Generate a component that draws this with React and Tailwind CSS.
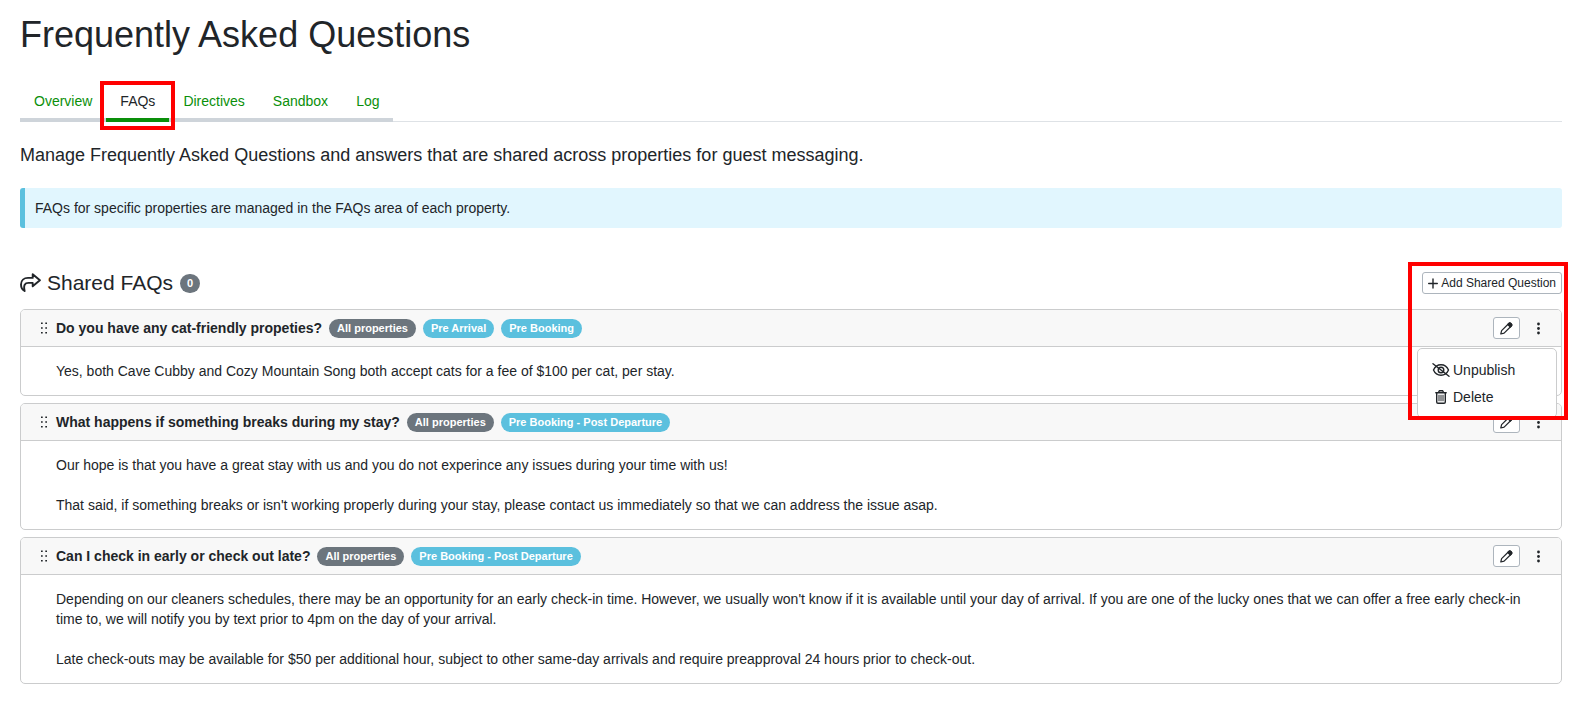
import { useState } from "react"

/* ---------------- Data ---------------- */
const tabs = ["Overview", "FAQs", "Directives", "Sandbox", "Log"]

const faqs = [
  {
    id: 1,
    question: "Do you have any cat-friendly propeties?",
    stages: ["Pre Arrival", "Pre Booking"],
    answer: ["Yes, both Cave Cubby and Cozy Mountain Song both accept cats for a fee of $100 per cat, per stay."],
  },
  {
    id: 2,
    question: "What happens if something breaks during my stay?",
    stages: ["Pre Booking - Post Departure"],
    answer: [
      "Our hope is that you have a great stay with us and you do not experince any issues during your time with us!",
      "That said, if something breaks or isn't working properly during your stay, please contact us immediately so that we can address the issue asap.",
    ],
  },
  {
    id: 3,
    question: "Can I check in early or check out late?",
    stages: ["Pre Booking - Post Departure"],
    answer: [
      "Depending on our cleaners schedules, there may be an opportunity for an early check-in time. However, we usually won't know if it is available until your day of arrival. If you are one of the lucky ones that we can offer a free early check-in time to, we will notify you by text prior to 4pm on the day of your arrival.",
      "Late check-outs may be available for $50 per additional hour, subject to other same-day arrivals and require preapproval 24 hours prior to check-out.",
    ],
  },
]

export default function App() {
  const [activeTab, setActiveTab] = useState("FAQs")
  const [openMenu, setOpenMenu] = useState(1)

  return (
    <main className="bg-white pt-3 pr-4 pb-4 pl-5 font-['Liberation_Sans',Arial,sans-serif] text-sm leading-5 text-[#212529]">
      <h1 className="text-4xl leading-[46px]">Frequently Asked Questions</h1>

      {/* Tabs */}
      <nav className="mt-[26px] flex border-b border-[#dee2e6]">
        {tabs.map((tab) => (
          <a
            key={tab}
            href={`#${tab.toLowerCase()}`}
            onClick={() => setActiveTab(tab)}
            className={
              "relative -mb-px border-b-4 px-3.5 py-[7px] " +
              (tab === activeTab ? "border-[#0a8f0a] text-[#212529]" : "border-[#ced4da] text-[#0a8f0a]")
            }
          >
            {tab}
            {tab === "FAQs" && (
              <span className="pointer-events-none absolute -inset-x-1.5 -top-[3px] -bottom-3 z-10 border-4 border-[#ff0000]" />
            )}
          </a>
        ))}
      </nav>

      <p className="mt-[19px] text-lg leading-7">
        Manage Frequently Asked Questions and answers that are shared across properties for guest messaging.
      </p>

      <div className="mt-[19px] rounded-[3px] border-l-[5px] border-[#5bc0de] bg-[#e1f6fe] px-2.5 py-2.5">
        FAQs for specific properties are managed in the FAQs area of each property.
      </div>

      {/* Shared FAQs */}
      <section className="relative mt-[41px]">
        <div className="flex items-center justify-between">
          <h2 className="flex items-center text-[21px] leading-7">
            <ShareIcon />
            <span className="ml-1.5">Shared FAQs</span>
            <Badge className="ml-[7px] bg-[#6c757d] px-[7px]">0</Badge>
          </h2>
          <button
            type="button"
            className="flex h-[22px] items-center gap-[3px] rounded-[3px] border border-[#adb5bd] px-[5px] text-xs"
          >
            <PlusIcon />
            Add Shared Question
          </button>
        </div>

        <div className="mt-3 flex flex-col gap-[7px]">
          {faqs.map((faq) => (
            <FaqCard
              key={faq.id}
              faq={faq}
              menuOpen={openMenu === faq.id}
              onToggle={() => setOpenMenu(openMenu === faq.id ? null : faq.id)}
            />
          ))}
        </div>

        <div className="pointer-events-none absolute -top-[7px] -right-1.5 z-20 h-[158px] w-40 border-4 border-[#ff0000]" />
      </section>
    </main>
  )
}

/* ---------------- Card ---------------- */
function FaqCard({ faq, menuOpen, onToggle }) {
  return (
    <article className="rounded-[5px] border border-[#cbcccd]">
      <header className="flex h-[37px] items-center rounded-t-[4px] border-b border-[#cbcccd] bg-[#f8f8f8] pr-1 pl-5">
        <GripIcon />
        <h3 className="ml-[9px] font-bold">{faq.question}</h3>
        <Badge className="ml-[7px] bg-[#6c757d] px-2">All properties</Badge>
        {faq.stages.map((stage) => (
          <Badge key={stage} className="ml-[7px] bg-[#5bc0de] px-2">{stage}</Badge>
        ))}

        <button
          type="button"
          aria-label="Edit"
          className="ml-auto flex h-[22px] w-[27px] items-center justify-center rounded-[3px] border border-[#adb5bd] bg-white"
        >
          <PencilIcon />
        </button>
        <div className="relative">
          <button
            type="button"
            aria-label="More actions"
            onClick={onToggle}
            className="flex h-[22px] w-[37px] items-center justify-center"
          >
            <KebabIcon />
          </button>
          {menuOpen && (
            <div className="absolute top-full right-0 z-10 mt-[9px] w-[140px] rounded-[5px] border border-[#cbcccd] bg-white py-[7px]">
              <MenuItem icon={<EyeSlashIcon />} label="Unpublish" />
              <MenuItem icon={<TrashIcon />} label="Delete" />
            </div>
          )}
        </div>
      </header>

      <div className="space-y-5 px-[35px] py-3.5">
        {faq.answer.map((text) => (
          <p key={text}>{text}</p>
        ))}
      </div>
    </article>
  )
}

function MenuItem({ icon, label }) {
  return (
    <button type="button" className="flex h-[27px] w-full items-center gap-[3px] px-3.5">
      <span className="flex w-[18px] justify-center">{icon}</span>
      {label}
    </button>
  )
}

function Badge({ className, children }) {
  return (
    <span className={"rounded-full text-[11px] leading-[19px] font-bold whitespace-nowrap text-white " + className}>
      {children}
    </span>
  )
}

/* ---------------- Icons ---------------- */
function ShareIcon() {
  return (
    <svg width="21" height="20" viewBox="0 0 21 20" fill="none" stroke="currentColor" strokeWidth="1.9" strokeLinejoin="round" strokeLinecap="round">
      <path d="M4.600 18 C1.800 16.500 1 14 1 11.500 C1 7.300 4 4.900 8 4.900 H12.700 V1.300 L19.900 7.300 L12.700 13.300 V9.900 H8.500 C4.800 9.900 3.300 12 4.600 18" />
    </svg>
  )
}

function PlusIcon() {
  return (
    <svg width="10" height="11" viewBox="0 0 10 11" stroke="currentColor" strokeWidth="1.4" strokeLinecap="round">
      <path d="M5 1 V10 M.7 5.500 H9.300" />
    </svg>
  )
}

function GripIcon() {
  return (
    <svg width="6" height="12" viewBox="0 0 6 12" fill="currentColor">
      <path d="M0 .5h1.700v1.500H0z M4.300 .5h1.700v1.500h-1.700z M0 5.200h1.700v1.500H0z M4.300 5.200h1.700v1.500h-1.700z M0 10h1.700v1.500H0z M4.300 10h1.700v1.500h-1.700z" />
    </svg>
  )
}

function PencilIcon() {
  return (
    <svg width="13" height="13" viewBox="0 0 13 13" fill="none" stroke="currentColor" strokeWidth="1.2" strokeLinejoin="round">
      <path d="M.8 12 L1.600 8.700 L8.800 1.500 Q9.800 .5 10.800 1.500 L11.300 2 Q12.300 3 11.300 4 L4.100 11.200 Z" />
      <path d="M7.800 2.500 L8.800 1.500 Q9.800 .5 10.800 1.500 L11.300 2 Q12.300 3 11.300 4 L10.300 5 Z" fill="currentColor" />
    </svg>
  )
}

function KebabIcon() {
  return (
    <svg width="3" height="13" viewBox="0 0 3 13" fill="currentColor">
      <circle cx="1.500" cy="2" r="1.400" />
      <circle cx="1.500" cy="6.500" r="1.400" />
      <circle cx="1.500" cy="11" r="1.400" />
    </svg>
  )
}

function EyeSlashIcon() {
  return (
    <svg width="18" height="14" viewBox="0 0 18 14" fill="none" stroke="currentColor" strokeWidth="1.400" strokeLinecap="round">
      <path d="M1.500 7 C3 3.500 6 1.800 9 1.800 C12 1.800 15 3.500 16.500 7 C15 10.500 12 12.200 9 12.200 C6 12.200 3 10.500 1.500 7 Z" />
      <circle cx="9" cy="7" r="2.800" />
      <path d="M1 .8 L17 13.200" />
    </svg>
  )
}

function TrashIcon() {
  return (
    <svg width="12" height="14" viewBox="0 0 12 14" fill="none" stroke="currentColor" strokeWidth="1.400" strokeLinecap="round" strokeLinejoin="round">
      <path d="M.8 2.700 H11.200 M3.500 2.500 L4.300 .8 H7.700 L8.500 2.500" />
      <path d="M1.700 2.700 V12 Q1.700 13.300 3 13.300 H9 Q10.300 13.300 10.300 12 V2.700" />
      <path d="M4 5.200 V10.800 M6 5.200 V10.800 M8 5.200 V10.800" strokeWidth="1" />
    </svg>
  )
}
